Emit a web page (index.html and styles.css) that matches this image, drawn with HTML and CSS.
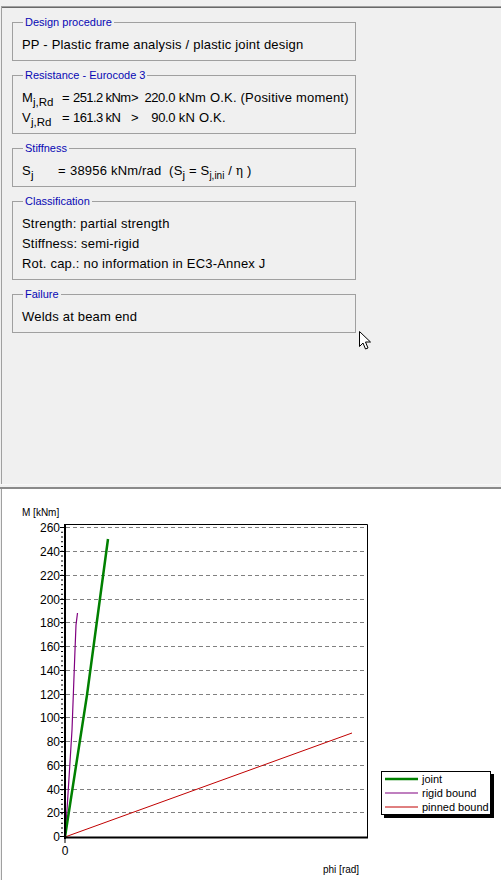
FILE: index.html
```html
<!DOCTYPE html>
<html>
<head>
<meta charset="utf-8">
<link rel="stylesheet" href="styles.css">
</head>
<body>
<div class="app">
  <div class="topstrip"></div>
  <div class="results">
    <fieldset class="group">
      <legend>Design procedure</legend>
      <div class="content">
        <div class="line">PP - Plastic frame analysis / plastic joint design</div>
      </div>
    </fieldset>
    <fieldset class="group">
      <legend>Resistance - Eurocode 3</legend>
      <div class="content">
        <div class="line"><span class="sym">M<sub>j,Rd</sub></span><span class="eq">=</span><span class="v1">251.2 kNm</span><span class="gt">&gt;</span><span class="num">220.0</span><span class="rest"> kNm O.K. (Positive moment)</span></div>
        <div class="line"><span class="sym">V<sub>j,Rd</sub></span><span class="eq">=</span><span class="v1">161.3 kN</span><span class="gt">&gt;</span><span class="num">90.0</span><span class="rest"> kN O.K.</span></div>
      </div>
    </fieldset>
    <fieldset class="group">
      <legend>Stiffness</legend>
      <div class="content">
        <div class="line"><span class="sym sym-s">S<sub>j</sub></span><span class="eq eq-s">=</span><span class="rest">38956 kNm/rad &nbsp;(S<sub>j</sub> = S<sub class="small">j,ini</sub> / <span class="eta">η</span> )</span></div>
      </div>
    </fieldset>
    <fieldset class="group">
      <legend>Classification</legend>
      <div class="content">
        <div class="line">Strength: partial strength</div>
        <div class="line">Stiffness: semi-rigid</div>
        <div class="line">Rot. cap.: no information in EC3-Annex J</div>
      </div>
    </fieldset>
    <fieldset class="group">
      <legend>Failure</legend>
      <div class="content">
        <div class="line">Welds at beam end</div>
      </div>
    </fieldset>
    <svg class="cursor" width="14" height="20" viewBox="0 0 14 20">
      <path d="M0.5 0.5 L0.5 15.5 L4 12 L6.5 18 L9 17 L6.5 11 L11.5 11 Z" fill="#fff" stroke="#000" stroke-width="1" stroke-linejoin="miter"/>
    </svg>
  </div>
  <div class="splitter"></div>
  <div class="chart">
    <svg class="plot" width="499" height="391" viewBox="2 489 499 391">
      <text class="axis-title" x="22" y="516">M [kNm]</text>
      <g class="grid">
        <line x1="66" y1="527.5" x2="367" y2="527.5"/>
        <line x1="66" y1="551.5" x2="367" y2="551.5"/>
        <line x1="66" y1="575.5" x2="367" y2="575.5"/>
        <line x1="66" y1="599.5" x2="367" y2="599.5"/>
        <line x1="66" y1="622.5" x2="367" y2="622.5"/>
        <line x1="66" y1="646.5" x2="367" y2="646.5"/>
        <line x1="66" y1="670.5" x2="367" y2="670.5"/>
        <line x1="66" y1="694.5" x2="367" y2="694.5"/>
        <line x1="66" y1="717.5" x2="367" y2="717.5"/>
        <line x1="66" y1="741.5" x2="367" y2="741.5"/>
        <line x1="66" y1="765.5" x2="367" y2="765.5"/>
        <line x1="66" y1="789.5" x2="367" y2="789.5"/>
        <line x1="66" y1="812.5" x2="367" y2="812.5"/>
      </g>
      <g class="ticks">
        <line x1="60" y1="527.5" x2="64" y2="527.5"/>
        <line x1="60" y1="551.5" x2="64" y2="551.5"/>
        <line x1="60" y1="575.5" x2="64" y2="575.5"/>
        <line x1="60" y1="599.5" x2="64" y2="599.5"/>
        <line x1="60" y1="622.5" x2="64" y2="622.5"/>
        <line x1="60" y1="646.5" x2="64" y2="646.5"/>
        <line x1="60" y1="670.5" x2="64" y2="670.5"/>
        <line x1="60" y1="694.5" x2="64" y2="694.5"/>
        <line x1="60" y1="717.5" x2="64" y2="717.5"/>
        <line x1="60" y1="741.5" x2="64" y2="741.5"/>
        <line x1="60" y1="765.5" x2="64" y2="765.5"/>
        <line x1="60" y1="789.5" x2="64" y2="789.5"/>
        <line x1="60" y1="812.5" x2="64" y2="812.5"/>
        <line x1="60" y1="836.5" x2="64" y2="836.5"/>
        <line class="minor" x1="62" y1="527" x2="62" y2="837"/>
        <line x1="65" y1="838" x2="65" y2="843"/>
      </g>
      <g class="ylabels">
        <text x="60" y="532">260</text>
        <text x="60" y="556">240</text>
        <text x="60" y="580">220</text>
        <text x="60" y="604">200</text>
        <text x="60" y="627">180</text>
        <text x="60" y="651">160</text>
        <text x="60" y="675">140</text>
        <text x="60" y="699">120</text>
        <text x="60" y="722">100</text>
        <text x="60" y="746">80</text>
        <text x="60" y="770">60</text>
        <text x="60" y="794">40</text>
        <text x="60" y="817">20</text>
        <text x="60" y="841">0</text>
      </g>
      <text class="xlabel" x="65" y="855">0</text>
      <text class="axis-title" x="323" y="873">phi [rad]</text>
      <polyline class="s-pinned" points="65,837 352,733"/>
      <polyline class="s-rigid" points="65,837 67,810 72,730 75,650 76,625 77.5,613"/>
      <polyline class="s-joint" points="65,837 87,695 108,539"/>
      <path class="frame" d="M64.5 524.5 H367.5 V837"/>
      <line class="axis" x1="65" y1="524" x2="65" y2="839"/>
      <line class="axis" x1="64" y1="837.5" x2="368" y2="837.5"/>
      <g class="legend">
        <rect class="legend-shadow" x="384" y="774" width="110" height="44"/>
        <rect class="legend-box" x="381.5" y="771.5" width="109" height="43"/>
        <line class="s-joint" x1="385" y1="779" x2="418" y2="779"/>
        <line class="s-rigid" x1="385" y1="793" x2="418" y2="793"/>
        <line class="s-pinned" x1="385" y1="807" x2="418" y2="807"/>
        <text x="422" y="783">joint</text>
        <text x="422" y="797">rigid bound</text>
        <text x="422" y="811">pinned bound</text>
      </g>
    </svg>
  </div>
</div>
</body>
</html>
```
FILE: styles.css
```css
html, body {
  margin: 0;
  padding: 0;
  background: #f0f0f0;
}
.app {
  width: 501px;
  height: 880px;
  display: flex;
  flex-direction: column;
  font-family: "Liberation Sans", Arial, sans-serif;
  color: #000;
  overflow: hidden;
}
.topstrip {
  height: 6px;
  flex: none;
}
.results {
  position: relative;
  flex: none;
  margin-left: 1px;
  border-top: 1px solid #a0a0a0;
  box-shadow: inset 0 1px 0 #696969;
  border-left: 1px solid #a0a0a0;
  padding: 9px 0 0 0;
  box-sizing: border-box;
  height: 478px;
}
.group {
  margin: 0 0 8px 10px;
  width: 344px;
  box-sizing: border-box;
  border: 1px solid #a0a0a0;
  padding: 0 9px 5px 9px;
  min-width: 0;
}
.group legend {
  font-size: 11px;
  line-height: 13px;
  color: #0808b4;
  padding: 0 2px;
  margin-left: 1px;
}
.content {
  padding-top: 6px;
}
.line {
  font-size: 13px;
  letter-spacing: 0.2px;
  line-height: 20px;
  height: 20px;
  white-space: nowrap;
}
.line sub {
  font-size: 11.5px;
  letter-spacing: 0;
  line-height: 0;
  vertical-align: -4px;
}
.line sub.small {
  font-size: 10px;
}
.sym, .eq, .v1, .gt, .num {
  display: inline-block;
}
.sym { width: 40px; }
.eq { width: 11px; }
.v1 { width: 58px; letter-spacing: -0.6px; }
.gt { width: 12px; }
.num { width: 32px; text-align: right; letter-spacing: -0.4px; }
.sym-s { width: 36px; }
.eq-s { width: 12px; }
.eta {
  font-family: "DejaVu Serif", serif;
  font-size: 12px;
}
.cursor {
  position: absolute;
  left: 357px;
  top: 324px;
}
.splitter {
  flex: none;
  height: 5px;
  box-sizing: border-box;
  border-top: 1px solid #f8f8f8;
  border-bottom: 2px solid #8a8a8a;
  background: #f0f0f0;
}
.chart {
  flex: 1;
  background: #fff;
  margin-left: 1px;
  border-left: 1px solid #a0a0a0;
}
.plot {
  display: block;
  font-family: "Liberation Sans", Arial, sans-serif;
}
.axis-title {
  font-size: 10px;
  fill: #000;
}
.ylabels text {
  font-size: 12px;
  text-anchor: end;
  fill: #000;
}
.xlabel {
  font-size: 12px;
  text-anchor: middle;
}
.grid line {
  stroke: #808080;
  stroke-width: 1;
  stroke-dasharray: 4 3;
}
.ticks line {
  stroke: #000;
  stroke-width: 1;
}
.ticks line.minor {
  stroke-width: 2;
  stroke-dasharray: 1 3.77;
}
.frame {
  fill: none;
  stroke: #000;
  stroke-width: 1;
}
.axis {
  stroke: #000;
  stroke-width: 2;
}
.s-joint {
  fill: none;
  stroke: #008000;
  stroke-width: 2.5;
}
.s-rigid {
  fill: none;
  stroke: #800080;
  stroke-width: 1.2;
}
.s-pinned {
  fill: none;
  stroke: #c00000;
  stroke-width: 1;
}
.legend-shadow {
  fill: #000;
}
.legend-box {
  fill: #fff;
  stroke: #000;
  stroke-width: 1;
}
.legend text {
  font-size: 11px;
  fill: #000;
}
```
